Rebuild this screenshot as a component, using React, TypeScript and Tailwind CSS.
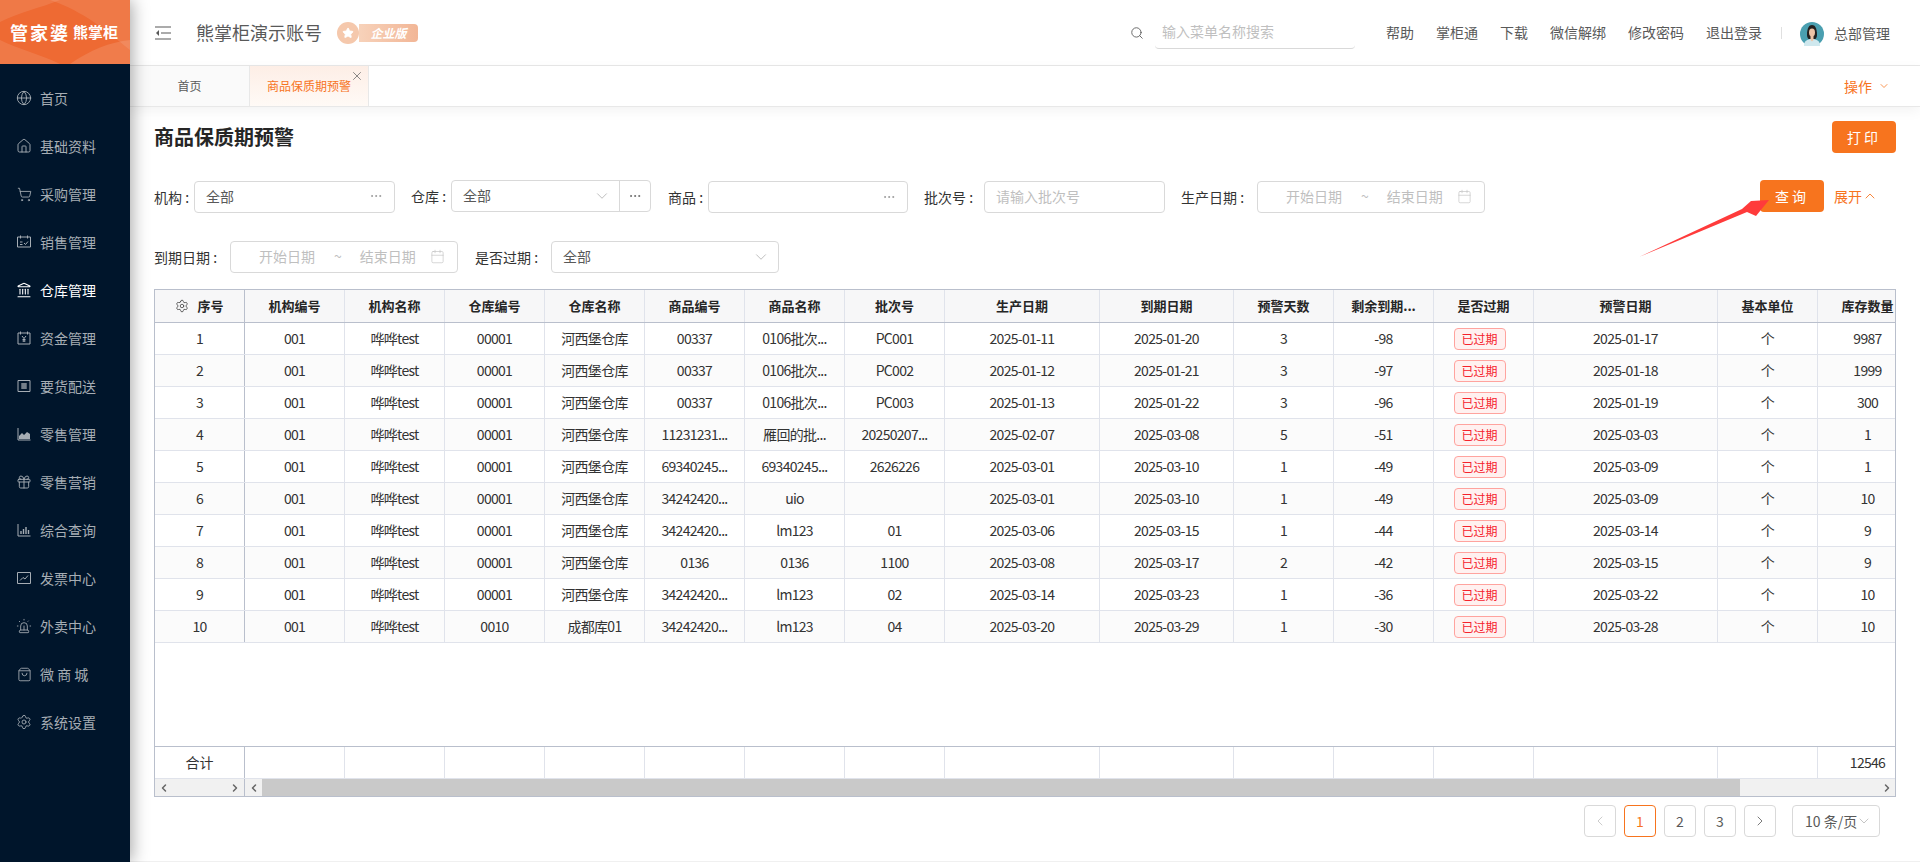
import { ChevronDown, ChevronUp, ChevronLeft, ChevronRight, Search, Calendar, Globe, House, ShoppingCart, Landmark, Gift, ShoppingBag, Settings, Siren, X, Star, Ellipsis } from 'lucide-react'
import type { ReactNode } from 'react'

const svgProps = {
  width: 16,
  height: 16,
  viewBox: '0 0 16 16',
  fill: 'none',
  stroke: 'currentColor',
  strokeWidth: 1,
}

// icons the packages don't have in this shape
const SalesIcon = () => (
  <svg {...svgProps}>
    <path d="M1.5 3h13v10h-13z M4.5 1.5v3 M11.5 1.5v3 M4 8h2.5 M4 10.5h2.5 M8 9l1.5 1.5L12 7.5" />
  </svg>
)
const FundIcon = () => (
  <svg {...svgProps}>
    <path d="M2 3h12v11H2z M4.5 1.5v3 M11.5 1.5v3 M6 6l2 2.5L10 6 M8 8.5V12 M6.5 9.5h3 M6.5 11h3" />
  </svg>
)
const DeliveryIcon = () => (
  <svg {...svgProps}>
    <path d="M2 2.5h12v11H2z" />
    <path d="M5.5 5.5h5v1h-5z M5.5 7.5h5v1h-5z M5.5 9.5h5v1h-5z" fill="currentColor" strokeWidth="0.4" />
  </svg>
)
const AreaIcon = () => (
  <svg {...svgProps}>
    <path d="M2 2v12h12.5" />
    <path d="M3 13V10l3-3 2 2 3-3 3 2v5z" fill="currentColor" stroke="none" />
  </svg>
)
const BarsIcon = () => (
  <svg {...svgProps}>
    <path d="M2 2v12h12.5" />
    <path d="M5 12V9 M7.5 12V7 M10 12V5 M12.5 12V8" strokeWidth="1.4" />
  </svg>
)
const InvoiceIcon = () => (
  <svg {...svgProps}>
    <path d="M1.5 2.5h13v11h-13z M4 10.5l3-3 2 1.5 3-3.5" />
  </svg>
)

const menus: { label: string; icon: ReactNode; active?: boolean }[] = [
  { label: '首页', icon: <Globe size={16} strokeWidth={1.4} /> },
  { label: '基础资料', icon: <House size={16} strokeWidth={1.4} /> },
  { label: '采购管理', icon: <ShoppingCart size={15} strokeWidth={1.4} /> },
  { label: '销售管理', icon: <SalesIcon /> },
  { label: '仓库管理', icon: <Landmark size={16} strokeWidth={1.6} />, active: true },
  { label: '资金管理', icon: <FundIcon /> },
  { label: '要货配送', icon: <DeliveryIcon /> },
  { label: '零售管理', icon: <AreaIcon /> },
  { label: '零售营销', icon: <Gift size={16} strokeWidth={1.4} /> },
  { label: '综合查询', icon: <BarsIcon /> },
  { label: '发票中心', icon: <InvoiceIcon /> },
  { label: '外卖中心', icon: <Siren size={16} strokeWidth={1.3} /> },
  { label: '微 商 城', icon: <ShoppingBag size={15} strokeWidth={1.4} /> },
  { label: '系统设置', icon: <Settings size={16} strokeWidth={1.3} /> },
]

const navLinks = ['帮助', '掌柜通', '下载', '微信解绑', '修改密码', '退出登录']

const colWidths = [
  'w-[90px]', 'w-[100px]', 'w-[100px]', 'w-[100px]', 'w-[100px]', 'w-[100px]', 'w-[100px]', 'w-[100px]',
  'w-[155px]', 'w-[134px]', 'w-[100px]', 'w-[100px]', 'w-[100px]', 'w-[184px]', 'w-[100px]', 'w-[100px]',
]

const columns = ['序号', '机构编号', '机构名称', '仓库编号', '仓库名称', '商品编号', '商品名称', '批次号', '生产日期', '到期日期', '预警天数', '剩余到期...', '是否过期', '预警日期', '基本单位', '库存数量']

const rows = [
  ['1', '001', '哗哗test', '00001', '河西堡仓库', '00337', '0106批次...', 'PC001', '2025-01-11', '2025-01-20', '3', '-98', '已过期', '2025-01-17', '个', '9987'],
  ['2', '001', '哗哗test', '00001', '河西堡仓库', '00337', '0106批次...', 'PC002', '2025-01-12', '2025-01-21', '3', '-97', '已过期', '2025-01-18', '个', '1999'],
  ['3', '001', '哗哗test', '00001', '河西堡仓库', '00337', '0106批次...', 'PC003', '2025-01-13', '2025-01-22', '3', '-96', '已过期', '2025-01-19', '个', '300'],
  ['4', '001', '哗哗test', '00001', '河西堡仓库', '11231231...', '雁回的批...', '20250207...', '2025-02-07', '2025-03-08', '5', '-51', '已过期', '2025-03-03', '个', '1'],
  ['5', '001', '哗哗test', '00001', '河西堡仓库', '69340245...', '69340245...', '2626226', '2025-03-01', '2025-03-10', '1', '-49', '已过期', '2025-03-09', '个', '1'],
  ['6', '001', '哗哗test', '00001', '河西堡仓库', '34242420...', 'uio', '', '2025-03-01', '2025-03-10', '1', '-49', '已过期', '2025-03-09', '个', '10'],
  ['7', '001', '哗哗test', '00001', '河西堡仓库', '34242420...', 'lm123', '01', '2025-03-06', '2025-03-15', '1', '-44', '已过期', '2025-03-14', '个', '9'],
  ['8', '001', '哗哗test', '00001', '河西堡仓库', '0136', '0136', '1100', '2025-03-08', '2025-03-17', '2', '-42', '已过期', '2025-03-15', '个', '9'],
  ['9', '001', '哗哗test', '00001', '河西堡仓库', '34242420...', 'lm123', '02', '2025-03-14', '2025-03-23', '1', '-36', '已过期', '2025-03-22', '个', '10'],
  ['10', '001', '哗哗test', '0010', '成都库01', '34242420...', 'lm123', '04', '2025-03-20', '2025-03-29', '1', '-30', '已过期', '2025-03-28', '个', '10'],
]

function Label({ text, width }: { text: string; width: string }) {
  return <span className={`${width} shrink-0 block text-[14px] text-[#333] whitespace-nowrap`}>{text} :</span>
}

function DateRange({ width }: { width: string }) {
  return (
    <div className={`${width} h-[32px] pb-[2px] border border-[#d9d9d9] rounded-[4px] flex items-center text-[14px] text-[#bfbfbf] pl-[28px] shrink-0`}>
      <span>开始日期</span>
      <span className="ml-[19px]">~</span>
      <span className="ml-[18px]">结束日期</span>
      <Calendar size={15} strokeWidth={1} className="ml-[14px]" />
    </div>
  )
}

function Avatar() {
  return (
    <svg width="24" height="24" viewBox="0 0 24 24">
      <circle cx="12" cy="12" r="12" fill="#4a9fb0" />
      <path d="M7 13c0-7 2-10 5-10s5 3 5 10c0 2-1 4-2 4H9c-1 0-2-2-2-4z" fill="#23201f" />
      <ellipse cx="12" cy="10.5" rx="3" ry="4" fill="#eec3a6" />
      <path d="M4 24c0-5 3-7 8-7s8 2 8 7z" fill="#cfe8ee" />
      <path d="M10.5 14h3v4l-1.5 1.5L10.5 18z" fill="#eec3a6" />
    </svg>
  )
}

function Table() {
  return (
    <div className="w-[1742px] h-[508px] border border-[#b9bfcc] flex flex-col overflow-hidden text-[14px] text-[#333]">
      <div className="flex h-[33px] shrink-0 bg-[#f7f7f8] border-b border-[#b9bfcc] text-[13px] font-bold text-[#262626]">
        {columns.map((c, i) => (
          <div key={c} className={`${colWidths[i]} shrink-0 h-full flex items-center justify-center border-r ${i === 0 ? 'border-[#b9bfcc]' : 'border-[#e0e3eb]'}`}>
            {i === 0 && <Settings size={14} strokeWidth={1.4} className="mr-[8px] text-[#444]" />}
            {c}
          </div>
        ))}
      </div>
      {rows.map((row, r) => (
        <div key={r} className={`flex h-[32px] shrink-0 border-b border-[#e0e3eb] ${r % 2 ? 'bg-[#fbfbfb]' : 'bg-white'}`}>
          {row.map((v, i) => (
            <div key={i} className={`${colWidths[i]} shrink-0 h-full flex items-center justify-center border-r whitespace-nowrap ${i === 0 ? 'border-[#b9bfcc]' : 'border-[#e0e3eb]'}`}>
              {i === 12 ? (
                <span className="mr-[8px] h-[22px] w-[52px] flex items-center justify-center rounded-[4px] border border-[#ffa39e] bg-[#fff1f0] text-[12px] text-[#f5222d]">{v}</span>
              ) : (
                <span className="tracking-[-0.7px]">{v}</span>
              )}
            </div>
          ))}
        </div>
      ))}
      <div className="flex-1" />
      <div className="flex h-[33px] shrink-0 border-t border-b border-t-[#b9bfcc] border-b-[#e0e3eb]">
        {columns.map((c, i) => (
          <div key={c} className={`${colWidths[i]} shrink-0 h-full flex items-center justify-center border-r ${i === 0 ? 'border-[#b9bfcc]' : 'border-[#e0e3eb]'}`}>
            {i === 0 && '合计'}
            {i === 15 && <span className="tracking-[-0.7px]">12546</span>}
          </div>
        ))}
      </div>
      <div className="flex h-[17px] shrink-0 bg-[#f1f1f1]">
        <div className="w-[90px] shrink-0 border-r border-[#b9bfcc] flex items-center justify-between px-[3px] text-[#666]">
          <ChevronLeft size={12} strokeWidth={3} />
          <ChevronRight size={12} strokeWidth={3} />
        </div>
        <div className="flex-1 flex items-center text-[#666]">
          <div className="w-[17px] flex justify-center"><ChevronLeft size={12} strokeWidth={3} /></div>
          <div className="w-[1478px] h-full bg-[#c9c9c9]" />
          <div className="flex-1 flex justify-end pr-[2px]"><ChevronRight size={12} strokeWidth={3} /></div>
        </div>
      </div>
    </div>
  )
}

export default function App() {
  return (
    <div className="relative flex h-[862px] w-[1920px] overflow-hidden bg-white font-['Noto_Sans_CJK_SC','Noto_Sans',sans-serif]">
      {/* Sidebar */}
      <aside className="relative z-20 w-[130px] shrink-0 bg-[#00152b] shadow-[2px_0_16px_rgba(0,0,0,0.35)]">
        <div className="relative h-[64px] overflow-hidden flex items-center pl-[10px] text-white font-bold whitespace-nowrap bg-[#ee6a33]">
          <svg className="absolute inset-0" width="130" height="64" viewBox="0 0 130 64" fill="#fff">
            <path d="M0 40c20 10 40 14 60 24H0z" opacity="0.1" />
            <path d="M0 0h60C40 8 20 12 0 22z" opacity="0.1" />
            <path d="M50 0h80v50C105 30 85 12 50 0z" opacity="0.1" />
            <path d="M70 64c20-14 40-22 60-24v24z" opacity="0.12" />
          </svg>
          <span className="relative text-[18px] tracking-[2px]">管家婆</span>
          <span className="relative ml-[3px] text-[15px]">熊掌柜</span>
        </div>
        <nav className="pt-[10px]">
          {menus.map((m) => (
            <div key={m.label} className={`h-[48px] flex items-center pl-[16px] text-[14px] ${m.active ? 'text-white' : 'text-[#a6adb4]'}`}>
              <span className="w-[16px] flex justify-center">{m.icon}</span>
              <span className="ml-[8px] whitespace-pre">{m.label}</span>
            </div>
          ))}
        </nav>
      </aside>

      <div className="flex-1 min-w-0 flex flex-col">
        {/* Top bar */}
        <header className="h-[66px] shrink-0 flex items-center border-b border-[#e8e8e8] pl-[25px] pr-[30px]">
          <svg width="16" height="14" viewBox="0 0 16 14" fill="none" stroke="#595959" strokeWidth="1.2">
            <path d="M0 1h16 M6 7h10 M0 13h16" />
            <path d="M4 4L1 7l3 3z" fill="#595959" stroke="none" />
          </svg>
          <span className="ml-[25px] text-[18px] text-[#595959]">熊掌柜演示账号</span>
          <div className="ml-[15px] flex items-center h-[22px]">
            <div className="w-[22px] h-[22px] rounded-full bg-[#f5c8ac] flex items-center justify-center">
              <Star size={12} fill="#fff" stroke="#fff" />
            </div>
            <div className="w-[59px] h-[18px] rounded-r-[4px] bg-[linear-gradient(90deg,#f7d2ba,#f2b696)] text-[12px] leading-[18px] font-bold italic text-white text-center">企业版</div>
          </div>
          <Search size={14} strokeWidth={1.5} className="ml-auto text-[#595959]" />
          <div className="ml-[11px] w-[200px] h-[32px] pb-[2px] border-b border-[#d9d9d9] rounded-b-[4px] pl-[7px] flex items-center text-[14px] text-[#bfbfbf]">输入菜单名称搜索</div>
          <div className="ml-[31px] flex items-center gap-[22px] text-[14px] text-[#595959]">
            {navLinks.map((l) => <span key={l}>{l}</span>)}
          </div>
          <div className="ml-[19px] w-px h-[12px] bg-[#e0e0e0]" />
          <div className="ml-[18px] flex items-center mt-[2px]"><Avatar /></div>
          <span className="ml-[10px] mt-[2px] text-[14px] text-[#595959]">总部管理</span>
        </header>

        {/* Tabs */}
        <div className="relative z-10 h-[41px] shrink-0 flex border-b border-[#e8e8e8] bg-white shadow-[0_4px_12px_rgba(0,0,0,0.05)]">
          <div className="w-[120px] flex items-center justify-center bg-[#fafafa] border-r border-[#e8e8e8] text-[12px] text-[#595959]">首页</div>
          <div className="relative w-[119px] flex items-center pl-[17px] border-r border-[#e8e8e8] bg-[linear-gradient(180deg,#fdeee6,#fffaf6)] text-[12px] text-[#f7741e] whitespace-nowrap">
            商品保质期预警
            <X size={14} strokeWidth={1.2} className="absolute right-[4px] top-[3px] text-[#595959]" />
          </div>
          <div className="ml-auto pr-[30px] flex items-center text-[14px] text-[#f7741e]">
            操作<ChevronDown size={12} strokeWidth={1.5} className="ml-[6px]" />
          </div>
        </div>

        {/* Content */}
        <main className="flex-1 min-h-0 px-[24px] border-b border-[#f0f0f0]">
          <div className="flex items-center justify-between pt-[14px] h-[46px]">
            <h1 className="text-[20px] font-bold text-[#262626]">商品保质期预警</h1>
            <button className="w-[64px] h-[32px] rounded-[4px] bg-[#f7741e] text-white text-[14px] tracking-[3px]">打印</button>
          </div>

          <div className="mt-[27px] flex items-start h-[33px] w-[1742px]">
            <div className="mt-px flex items-center">
              <Label text="机构" width="w-[40px]" />
              <div className="w-[201px] h-[32px] pb-[2px] border border-[#d9d9d9] rounded-[4px] flex items-center justify-between pl-[11px] pr-[11px] text-[14px] text-[#595959]">
                全部<Ellipsis size={14} strokeWidth={1} className="text-[#777]" />
              </div>
            </div>
            <div className="ml-[16px] flex items-center">
              <Label text="仓库" width="w-[40px]" />
              <div className="w-[200px] h-[32px] border border-[#d9d9d9] rounded-[4px] flex items-center pl-[11px] text-[14px] text-[#595959]">
                <span className="pb-[2px]">全部</span>
                <ChevronDown size={18} strokeWidth={1.1} className="ml-auto mr-[8px] text-[#b0b0b0]" />
                <div className="w-[31px] h-full border-l border-[#d9d9d9] flex items-center justify-center text-[#555]"><Ellipsis size={14} strokeWidth={1.3} /></div>
              </div>
            </div>
            <div className="mt-px ml-[17px] flex items-center">
              <Label text="商品" width="w-[40px]" />
              <div className="w-[200px] h-[32px] border border-[#d9d9d9] rounded-[4px] flex items-center justify-end pr-[11px]">
                <Ellipsis size={14} strokeWidth={1} className="text-[#777]" />
              </div>
            </div>
            <div className="mt-px ml-[16px] flex items-center">
              <Label text="批次号" width="w-[60px]" />
              <div className="w-[181px] h-[32px] pb-[2px] border border-[#d9d9d9] rounded-[4px] flex items-center pl-[11px] text-[14px] text-[#bfbfbf]">请输入批次号</div>
            </div>
            <div className="mt-px ml-[16px] flex items-center">
              <Label text="生产日期" width="w-[76px]" />
              <DateRange width="w-[228px]" />
            </div>
            <button className="ml-auto w-[64px] h-[32px] rounded-[4px] bg-[#f7741e] text-white text-[14px] tracking-[3px]">查询</button>
            <div className="w-[72px] pl-[10px] h-[32px] flex items-center text-[14px] text-[#f7741e]">
              展开<ChevronUp size={16} strokeWidth={1.3} />
            </div>
          </div>

          <div className="mt-[28px] flex items-center">
            <Label text="到期日期" width="w-[76px]" />
            <DateRange width="w-[228px]" />
            <div className="ml-[17px] flex items-center"><Label text="是否过期" width="w-[76px]" /></div>
            <div className="w-[228px] h-[32px] border border-[#d9d9d9] rounded-[4px] flex items-center justify-between pl-[11px] pr-[8px] text-[14px] text-[#595959]">
              <span className="pb-[2px]">全部</span><ChevronDown size={18} strokeWidth={1.1} className="text-[#b0b0b0]" />
            </div>
          </div>

          <div className="mt-[16px]"><Table /></div>

          {/* Pagination */}
          <div className="mt-[8px] pr-[16px] flex justify-end items-center gap-[8px] text-[14px] text-[#595959]">
            <div className="w-[32px] h-[32px] rounded-[4px] border border-[#d9d9d9] flex items-center justify-center text-[#bfbfbf]"><ChevronLeft size={16} strokeWidth={1.2} /></div>
            <div className="w-[32px] h-[32px] rounded-[4px] border border-[#f7741e] text-[#f7741e] flex items-center justify-center">1</div>
            <div className="w-[32px] h-[32px] rounded-[4px] border border-[#d9d9d9] flex items-center justify-center">2</div>
            <div className="w-[32px] h-[32px] rounded-[4px] border border-[#d9d9d9] flex items-center justify-center">3</div>
            <div className="w-[32px] h-[32px] rounded-[4px] border border-[#d9d9d9] flex items-center justify-center"><ChevronRight size={16} strokeWidth={1.2} /></div>
            <div className="ml-[8px] w-[88px] h-[32px] rounded-[4px] border border-[#d9d9d9] flex items-center pl-[12px] whitespace-nowrap">
              <span>10 条/页</span><ChevronDown size={16} strokeWidth={1.1} className="shrink-0 -ml-[1px] text-[#b0b0b0]" />
            </div>
          </div>
        </main>
      </div>

      {/* annotation arrow drawn over the page */}
      <svg className="absolute left-[1630px] top-[195px] z-30" width="145" height="65" viewBox="0 0 145 65">
        <polygon points="9,62 112,14 121,6 139,5 126,21 117,17" fill="#ff3b3b" />
      </svg>
    </div>
  )
}
